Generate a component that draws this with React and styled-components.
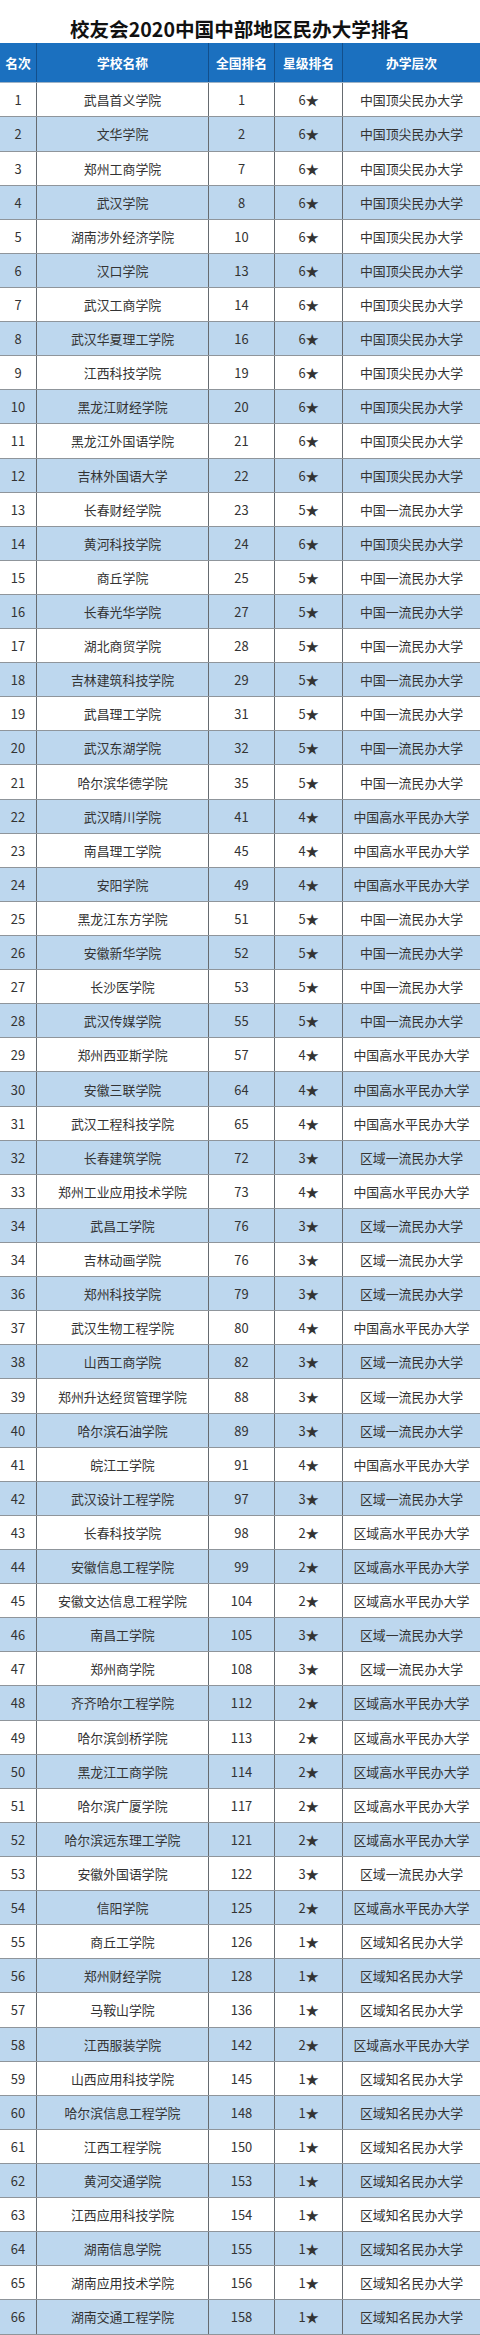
import React from 'react'
import styled, { createGlobalStyle } from 'styled-components'

const GlobalStyle = createGlobalStyle`
  html, body {
    margin: 0;
    padding: 0;
    background: #fff;
  }
  body {
    font-family: "Noto Sans CJK SC", "Noto Sans", sans-serif;
  }
`

const Page = styled.div`
  width: 480px;
  background: #fff;
`

const Title = styled.h1`
  margin: 0;
  height: 43px;
  box-sizing: border-box;
  padding-bottom: 3px;
  display: flex;
  align-items: flex-end;
  justify-content: center;
  font-size: 19.6px;
  line-height: 1.05;
  font-weight: 700;
  color: #111;
  letter-spacing: 0;
`

const Row = styled.div`
  display: grid;
  grid-template-columns: 37px 172px 66px 68px 1fr;
  height: ${({ $head }) => ($head ? '40.3px' : '34.12px')};
  box-sizing: border-box;
  background: ${({ $head, $shade }) =>
    $head ? '#1b70bf' : $shade ? '#bdd7ee' : '#fff'};
  border-bottom: 1px solid ${({ $head }) => ($head ? '#9fb3c6' : '#8f959b')};
`

const Cell = styled.div`
  display: flex;
  align-items: center;
  justify-content: center;
  box-sizing: border-box;
  white-space: nowrap;
  font-size: ${({ $head }) => ($head ? '12.8px' : '12.9px')};
  font-weight: ${({ $head }) => ($head ? 700 : 400)};
  color: ${({ $head }) => ($head ? '#fff' : '#333')};
  border-right: 1px solid ${({ $head }) => ($head ? '#124f8c' : '#666b70')};

  &:last-child {
    border-right: none;
  }
`

const levels = {
  a: '中国顶尖民办大学',
  b: '中国一流民办大学',
  c: '中国高水平民办大学',
  d: '区域一流民办大学',
  e: '区域高水平民办大学',
  f: '区域知名民办大学',
}

const schools = [
  [1, '武昌首义学院', 1, 6, 'a'],
  [2, '文华学院', 2, 6, 'a'],
  [3, '郑州工商学院', 7, 6, 'a'],
  [4, '武汉学院', 8, 6, 'a'],
  [5, '湖南涉外经济学院', 10, 6, 'a'],
  [6, '汉口学院', 13, 6, 'a'],
  [7, '武汉工商学院', 14, 6, 'a'],
  [8, '武汉华夏理工学院', 16, 6, 'a'],
  [9, '江西科技学院', 19, 6, 'a'],
  [10, '黑龙江财经学院', 20, 6, 'a'],
  [11, '黑龙江外国语学院', 21, 6, 'a'],
  [12, '吉林外国语大学', 22, 6, 'a'],
  [13, '长春财经学院', 23, 5, 'b'],
  [14, '黄河科技学院', 24, 6, 'a'],
  [15, '商丘学院', 25, 5, 'b'],
  [16, '长春光华学院', 27, 5, 'b'],
  [17, '湖北商贸学院', 28, 5, 'b'],
  [18, '吉林建筑科技学院', 29, 5, 'b'],
  [19, '武昌理工学院', 31, 5, 'b'],
  [20, '武汉东湖学院', 32, 5, 'b'],
  [21, '哈尔滨华德学院', 35, 5, 'b'],
  [22, '武汉晴川学院', 41, 4, 'c'],
  [23, '南昌理工学院', 45, 4, 'c'],
  [24, '安阳学院', 49, 4, 'c'],
  [25, '黑龙江东方学院', 51, 5, 'b'],
  [26, '安徽新华学院', 52, 5, 'b'],
  [27, '长沙医学院', 53, 5, 'b'],
  [28, '武汉传媒学院', 55, 5, 'b'],
  [29, '郑州西亚斯学院', 57, 4, 'c'],
  [30, '安徽三联学院', 64, 4, 'c'],
  [31, '武汉工程科技学院', 65, 4, 'c'],
  [32, '长春建筑学院', 72, 3, 'd'],
  [33, '郑州工业应用技术学院', 73, 4, 'c'],
  [34, '武昌工学院', 76, 3, 'd'],
  [34, '吉林动画学院', 76, 3, 'd'],
  [36, '郑州科技学院', 79, 3, 'd'],
  [37, '武汉生物工程学院', 80, 4, 'c'],
  [38, '山西工商学院', 82, 3, 'd'],
  [39, '郑州升达经贸管理学院', 88, 3, 'd'],
  [40, '哈尔滨石油学院', 89, 3, 'd'],
  [41, '皖江工学院', 91, 4, 'c'],
  [42, '武汉设计工程学院', 97, 3, 'd'],
  [43, '长春科技学院', 98, 2, 'e'],
  [44, '安徽信息工程学院', 99, 2, 'e'],
  [45, '安徽文达信息工程学院', 104, 2, 'e'],
  [46, '南昌工学院', 105, 3, 'd'],
  [47, '郑州商学院', 108, 3, 'd'],
  [48, '齐齐哈尔工程学院', 112, 2, 'e'],
  [49, '哈尔滨剑桥学院', 113, 2, 'e'],
  [50, '黑龙江工商学院', 114, 2, 'e'],
  [51, '哈尔滨广厦学院', 117, 2, 'e'],
  [52, '哈尔滨远东理工学院', 121, 2, 'e'],
  [53, '安徽外国语学院', 122, 3, 'd'],
  [54, '信阳学院', 125, 2, 'e'],
  [55, '商丘工学院', 126, 1, 'f'],
  [56, '郑州财经学院', 128, 1, 'f'],
  [57, '马鞍山学院', 136, 1, 'f'],
  [58, '江西服装学院', 142, 2, 'e'],
  [59, '山西应用科技学院', 145, 1, 'f'],
  [60, '哈尔滨信息工程学院', 148, 1, 'f'],
  [61, '江西工程学院', 150, 1, 'f'],
  [62, '黄河交通学院', 153, 1, 'f'],
  [63, '江西应用科技学院', 154, 1, 'f'],
  [64, '湖南信息学院', 155, 1, 'f'],
  [65, '湖南应用技术学院', 156, 1, 'f'],
  [66, '湖南交通工程学院', 158, 1, 'f'],
]

const headers = ['名次', '学校名称', '全国排名', '星级排名', '办学层次']

const App = () => (
  <Page>
    <GlobalStyle />
    <Title>校友会2020中国中部地区民办大学排名</Title>
    <Row $head>
      {headers.map((h) => (
        <Cell $head key={h}>
          {h}
        </Cell>
      ))}
    </Row>
    {schools.map(([place, name, national, stars, level], i) => (
      <Row key={name} $shade={i % 2 === 1}>
        <Cell>{place}</Cell>
        <Cell>{name}</Cell>
        <Cell>{national}</Cell>
        <Cell>{stars}★</Cell>
        <Cell>{levels[level]}</Cell>
      </Row>
    ))}
  </Page>
)

export default App
